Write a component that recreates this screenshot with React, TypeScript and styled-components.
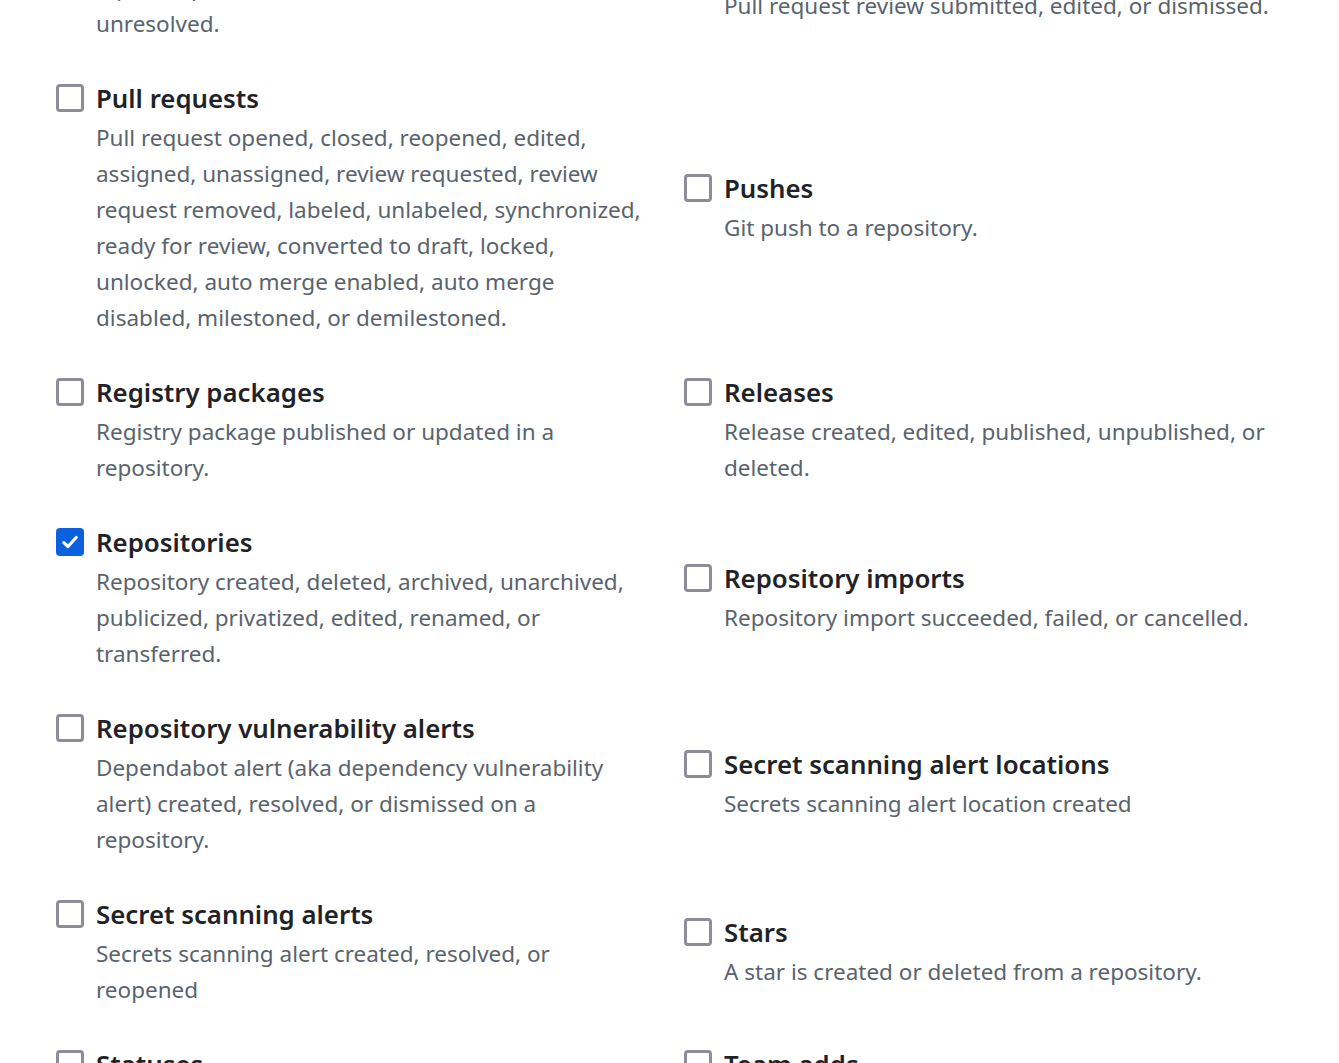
import React from 'react'
import styled, { createGlobalStyle } from 'styled-components'

const GlobalStyle = createGlobalStyle`
  html, body {
    margin: 0;
    background: #ffffff;
    overflow: hidden;
  }
  body {
    font-family: "Segoe UI", "Noto Sans", "Open Sans", sans-serif;
  }
`

const Page = styled.div`
  height: 1063px;
  overflow: hidden;
  padding-left: 56px;
`

const EventGrid = styled.div`
  margin-top: -74px;
  display: grid;
  grid-template-columns: 596px 596px;
  column-gap: 32px;
  row-gap: 34px;
  align-items: center;
`

const EventItem = styled.label`
  display: grid;
  grid-template-columns: 27px 1fr;
  column-gap: 13px;
  align-items: start;
  cursor: pointer;
`

const Box = styled.span<{ $checked?: boolean }>`
  margin-top: 8px;
  width: 28px;
  height: 28px;
  box-sizing: border-box;
  border-radius: 4px;
  border: ${(p) => (p.$checked ? 'none' : '3px solid #8d8c98')};
  background: ${(p) => (p.$checked ? '#0b60dd' : '#ffffff')};
  display: flex;
  align-items: center;
  justify-content: center;
`

const Title = styled.div`
  font-size: 25.8px;
  line-height: 44px;
  font-weight: 600;
  color: #1f2328;
`

const Description = styled.div`
  font-size: 22.5px;
  line-height: 36px;
  color: #59636e;
`

const NoWrap = styled.span`
  white-space: nowrap;
`

type EventDef = { title: string; description: React.ReactNode; checked?: boolean }

const events: EventDef[] = [
  {
    title: 'Pull request review threads',
    description: (
      <>
        <NoWrap>A pull request review thread was marked as resolved or</NoWrap>
        <br />
        unresolved.
      </>
    ),
  },
  {
    title: 'Pull request reviews',
    description: 'Pull request review submitted, edited, or dismissed.',
  },
  {
    title: 'Pull requests',
    description:
      'Pull request opened, closed, reopened, edited, assigned, unassigned, review requested, review request removed, labeled, unlabeled, synchronized, ready for review, converted to draft, locked, unlocked, auto merge enabled, auto merge disabled, milestoned, or demilestoned.',
  },
  { title: 'Pushes', description: 'Git push to a repository.' },
  {
    title: 'Registry packages',
    description: 'Registry package published or updated in a repository.',
  },
  {
    title: 'Releases',
    description: 'Release created, edited, published, unpublished, or deleted.',
  },
  {
    title: 'Repositories',
    description:
      'Repository created, deleted, archived, unarchived, publicized, privatized, edited, renamed, or transferred.',
    checked: true,
  },
  {
    title: 'Repository imports',
    description: 'Repository import succeeded, failed, or cancelled.',
  },
  {
    title: 'Repository vulnerability alerts',
    description:
      'Dependabot alert (aka dependency vulnerability alert) created, resolved, or dismissed on a repository.',
  },
  {
    title: 'Secret scanning alert locations',
    description: 'Secrets scanning alert location created',
  },
  {
    title: 'Secret scanning alerts',
    description: 'Secrets scanning alert created, resolved, or reopened',
  },
  { title: 'Stars', description: 'A star is created or deleted from a repository.' },
  { title: 'Statuses', description: 'Commit status updated from the API.' },
  { title: 'Team adds', description: 'Team added or modified on a repository.' },
]

function CheckMark() {
  return (
    <svg width="18" height="18" viewBox="0 0 16 16" fill="none">
      <path
        d="M2.5 8.5 6.2 12 13.5 4"
        stroke="#ffffff"
        strokeWidth="2.8"
        strokeLinecap="round"
        strokeLinejoin="round"
      />
    </svg>
  )
}

function Event({ title, description, checked }: EventDef) {
  return (
    <EventItem>
      <Box $checked={checked}>{checked && <CheckMark />}</Box>
      <div>
        <Title>{title}</Title>
        <Description>{description}</Description>
      </div>
    </EventItem>
  )
}

export default function App() {
  return (
    <Page>
      <GlobalStyle />
      <EventGrid>
        {events.map((e) => (
          <Event key={e.title} {...e} />
        ))}
      </EventGrid>
    </Page>
  )
}
